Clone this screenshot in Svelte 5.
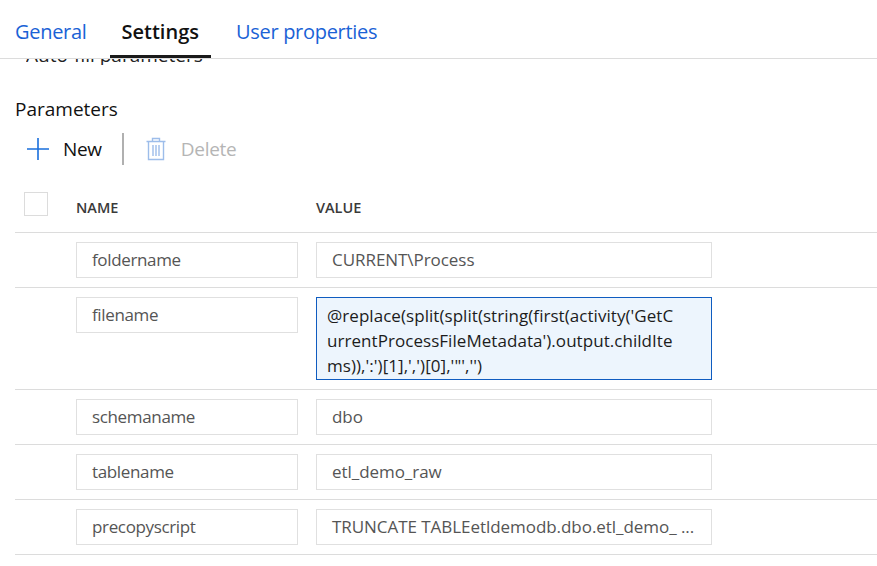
<script>
	const params = [
		{ name: "foldername", value: "CURRENT\\Process" },
		{ name: "filename", value: "@replace(split(split(string(first(activity('GetCurrentProcessFileMetadata').output.childItems)),':')[1],',')[0],'\"','')", active: true },
		{ name: "schemaname", value: "dbo" },
		{ name: "tablename", value: "etl_demo_raw" },
		{ name: "precopyscript", value: "TRUNCATE TABLEetldemodb.dbo.etl_demo_ ..." },
	];
</script>

<div class="page">
	<nav class="tabs">
		<span class="tab">General</span>
		<span class="tab selected">Settings</span>
		<span class="tab">User properties</span>
	</nav>

	<div class="content">
		<div class="clipped">Auto-fill parameters</div>
		<h2>Parameters</h2>

		<div class="toolbar">
			<button class="tool new">
				<svg width="24" height="24" viewBox="0 0 24 24">
					<path d="M12 1v22M1 12h22" stroke="#1a6fdc" stroke-width="1.6" fill="none" />
				</svg>
				New
			</button>
			<span class="sep"></span>
			<button class="tool del">
				<svg width="20" height="24" viewBox="0 0 20 24" fill="none" stroke="#9dbdea" stroke-width="1.4">
					<path d="M0.5 4.5h19M6.5 4.5V1.5h7v3M2.5 4.5v18h15v-18M7 8v11M10 8v11M13 8v11" />
				</svg>
				Delete
			</button>
		</div>

		<div class="head">
			<span class="check"></span>
			<span class="col-name">NAME</span>
			<span class="col-value">VALUE</span>
		</div>

		{#each params as p}
			<div class="row">
				<div class="field name">{p.name}</div>
				{#if p.active}
					<div class="field value active">{p.value}</div>
				{:else}
					<div class="field value">{p.value}</div>
				{/if}
			</div>
		{/each}
	</div>
</div>

<style>
	:global(body) {
		margin: 0;
		background: #fff;
	}

	.page {
		width: 877px;
		height: 566px;
		overflow: hidden;
		font-family: "Open Sans", "Noto Sans", sans-serif;
		color: #111;
	}

	.tabs {
		display: flex;
		gap: 12px;
		height: 59px;
		padding-left: 3px;
		box-sizing: border-box;
		border-bottom: 1px solid #dcdcdc;
		background: #fff;
		font-size: 20px;
		letter-spacing: -0.3px;
	}

	.tab {
		height: 58px;
		box-sizing: border-box;
		padding: 18px 12px 0;
		line-height: 28px;
		color: #1a62d6;
	}

	.selected {
		color: #111;
		font-weight: 600;
		letter-spacing: 0;
		margin: 0 1px 0 -1px;
		padding: 18px 12px 0;
		border-bottom: 3px solid #1a1a1a;
	}

	.content {
		padding-left: 15px;
		height: 507px;
		overflow: hidden;
	}

	.clipped {
		margin: -14px 0 0 11px;
		font-size: 19px;
		line-height: 20px;
		height: 20px;
		color: #222;
		clip-path: inset(14px 0 0 0);
	}

	h2 {
		margin: 32px 0 0;
		font-size: 19px;
		font-weight: 400;
		line-height: 24px;
		color: #111;
	}

	.toolbar {
		display: flex;
		align-items: center;
		height: 34px;
		margin-top: 11px;
	}

	.tool {
		display: flex;
		align-items: center;
		border: 0;
		background: none;
		padding: 0;
		font: inherit;
		font-size: 19px;
		letter-spacing: -0.3px;
	}

	.new {
		margin-left: 11px;
		gap: 13px;
		color: #111;
	}

	.sep {
		width: 2px;
		height: 32px;
		margin: 0 22px 0 20px;
		background: #b0b0b0;
	}

	.del {
		gap: 15px;
		color: #b5b5b5;
	}

	.head {
		display: flex;
		align-items: center;
		height: 50px;
		margin-top: 16px;
		border-bottom: 1px solid #dcdcdc;
		font-size: 14.5px;
		font-weight: 600;
		color: #3a3a3a;
	}

	.check {
		width: 22px;
		height: 22px;
		margin: 0 0 6px 9px;
		border: 1px solid #dcdcdc;
	}

	.col-name {
		margin-left: 28px;
		width: 240px;
	}

	.row {
		display: flex;
		gap: 18px;
		padding: 9px 0 9px 61px;
		border-bottom: 1px solid #dcdcdc;
		align-items: flex-start;
	}

	.field {
		box-sizing: border-box;
		height: 36px;
		border: 1.5px solid #e0e0e0;
		padding: 0 15px;
		font-size: 17px;
		line-height: 34px;
		letter-spacing: -0.35px;
		color: #555;
		white-space: nowrap;
		overflow: hidden;
	}

	.name {
		width: 222px;
	}

	.value {
		width: 396px;
		letter-spacing: -0.05px;
	}

	.active {
		height: 83px;
		padding: 5px 30px 0 10px;
		line-height: 25px;
		letter-spacing: 0.05px;
		border: 1px solid #0f5cc0;
		background: #edf5fd;
		color: #1c1c1c;
		white-space: normal;
		word-break: break-all;
	}
</style>
